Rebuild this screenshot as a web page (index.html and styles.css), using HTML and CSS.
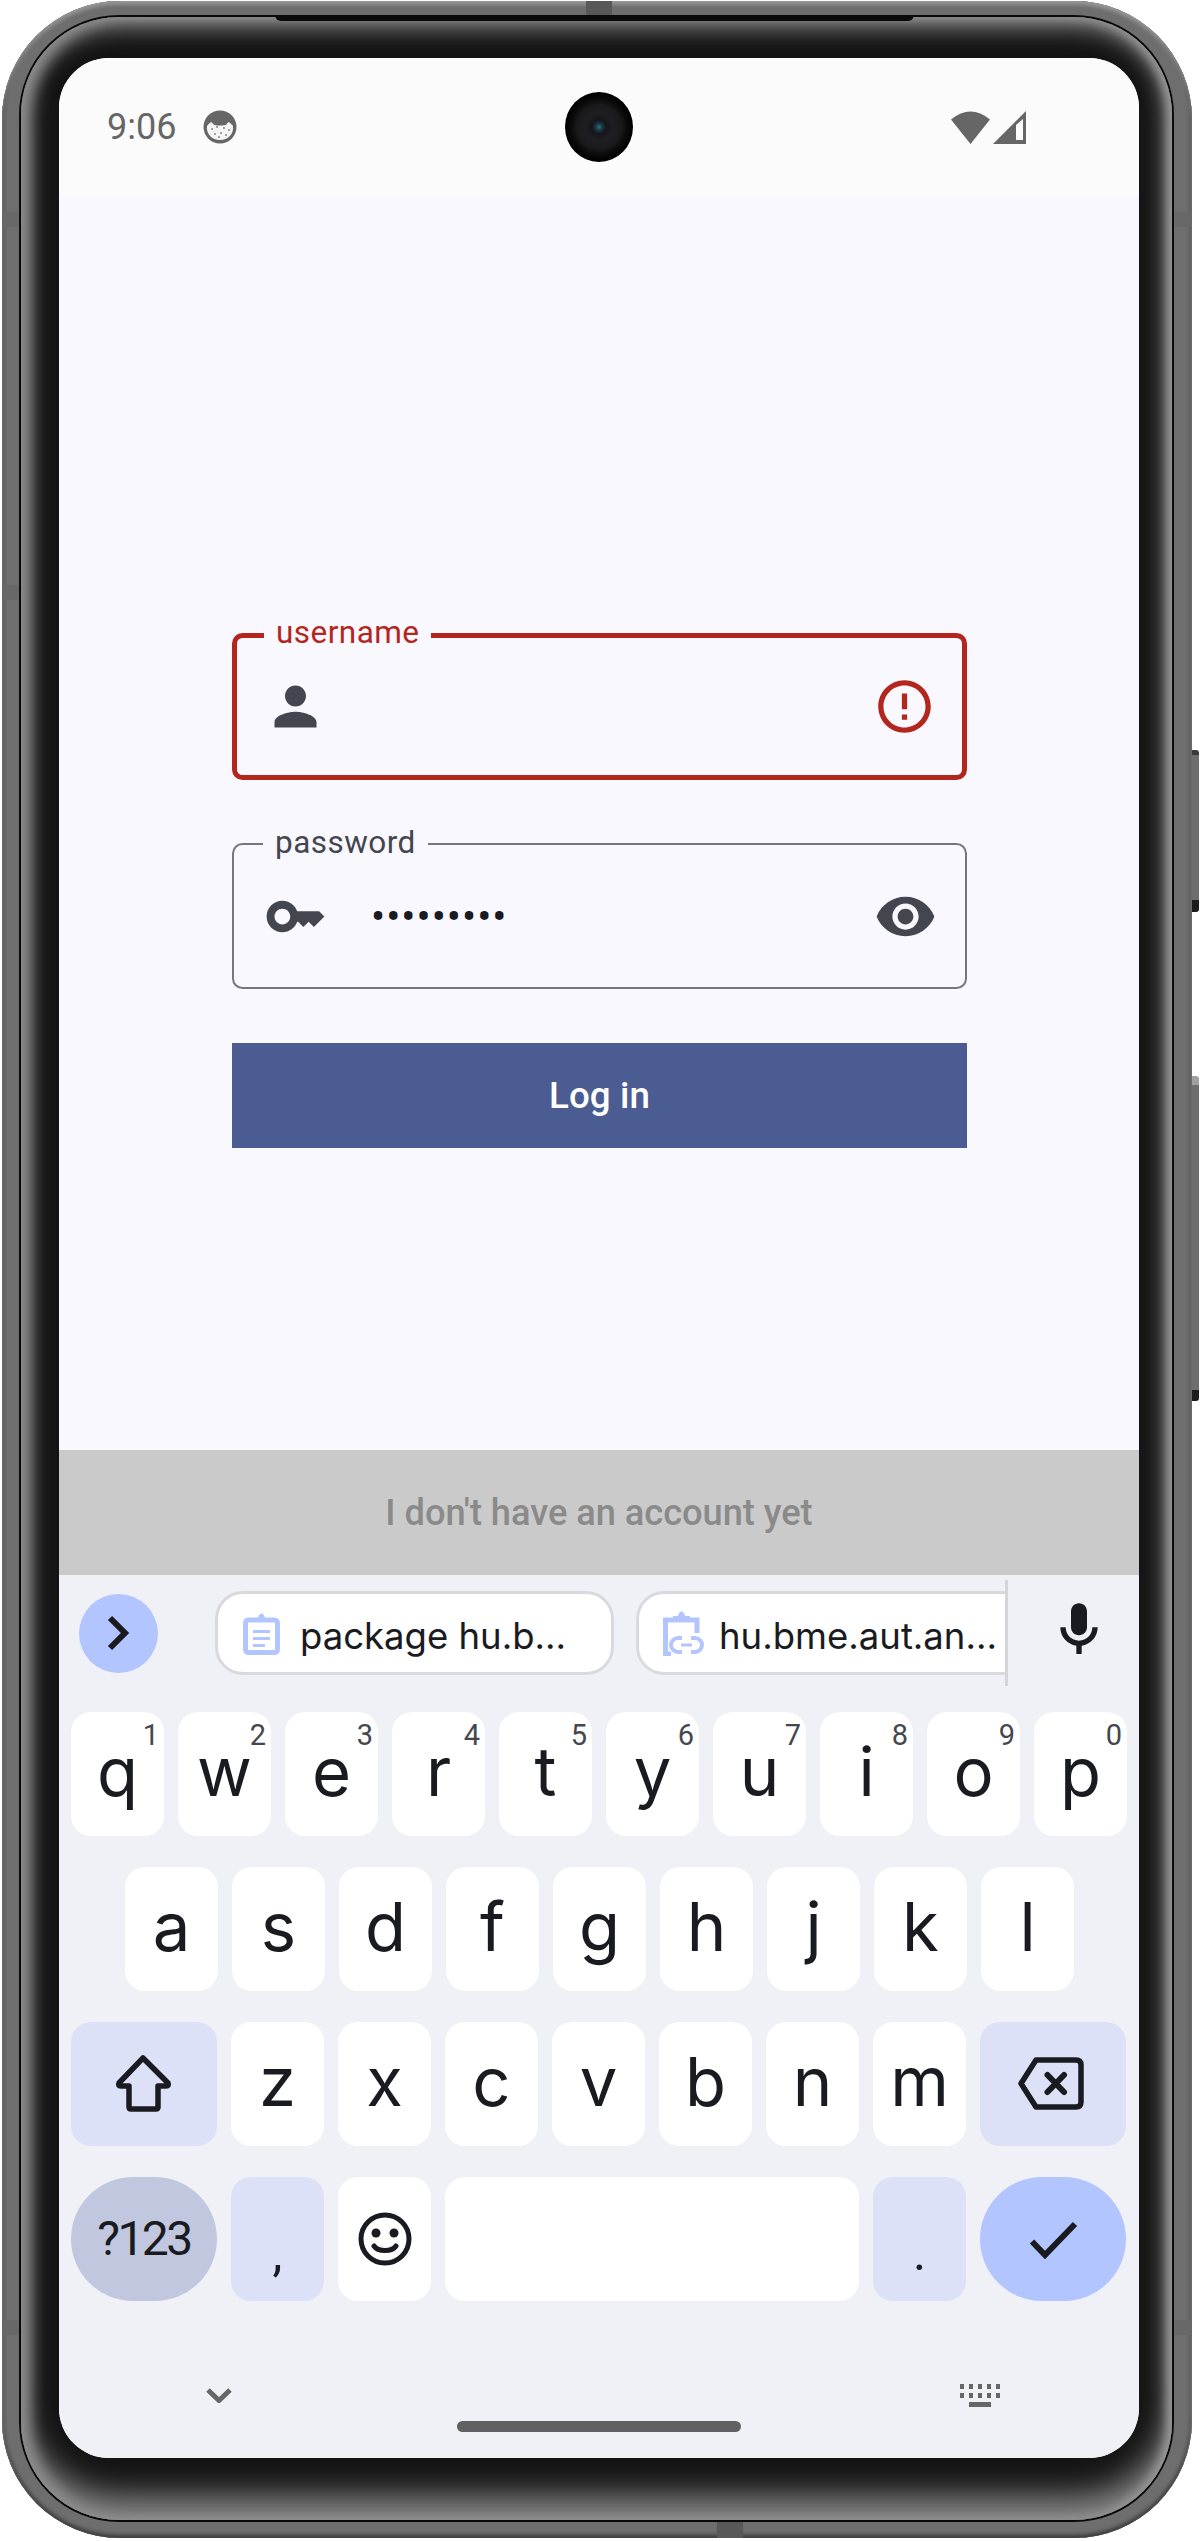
FILE: index.html
```html
<!DOCTYPE html>
<html lang="en">
  <head>
    <meta charset="UTF-8" />
    <title>Log in</title>
    <link rel="stylesheet" href="styles.css">
  </head>
  <body>
    <div class="device">
      <div class="phone">
        <div class="phone-line">
          <div class="phone-bezel">
            <div class="screen">
              <div class="status-bar">
                <span class="clock">9:06</span>
                <svg class="status-app" width="34" height="34" viewBox="0 0 34 34">
                  <circle cx="17" cy="17" r="16.5" fill="#666" />
                  <path d="M4 16c3-4 5-5 6-2 2 2 12 2 14 0 1-3 3-2 6 2 1 8-5 14-13 14S3 24 4 16z" fill="#f4f4f4" />
                  <g fill="#888">
                    <circle cx="9" cy="19" r="1" /><circle cx="14" cy="17" r="1" /><circle cx="21" cy="18" r="1" />
                    <circle cx="26" cy="20" r="1" /><circle cx="12" cy="24" r="1" /><circle cx="18" cy="23" r="1" />
                    <circle cx="23" cy="25" r="1" /><circle cx="16" cy="27" r="1" />
                  </g>
                </svg>
                <span class="status-right">
                  <svg width="39" height="34" viewBox="0 0 39 34"><path d="M0 9.5Q19.5-6.500 39 9.500L19.500 34z" fill="#666" /></svg>
                  <svg width="33" height="33" viewBox="0 0 33 33"><path d="M0 33 33 0V33z" fill="#666" /><path d="M23 14 30 8V29H23z" fill="#fbfbfb" /></svg>
                </span>
              </div>
              <div class="camera"></div>

              <div class="content">
                <form class="login-form">
                  <div class="field field-error">
                    <label class="field-label">username</label>
                    <svg class="field-icon" viewBox="0 0 24 24"><path d="M12 12c2.210 0 4-1.790 4-4s-1.790-4-4-4-4 1.790-4 4 1.790 4 4 4zm0 2c-2.670 0-8 1.340-8 4v2h16v-2c0-2.660-5.330-4-8-4z" /></svg>
                    <span class="field-value"></span>
                    <svg class="field-icon icon-error" viewBox="0 0 24 24"><path d="M11 15h2v2h-2zm0-8h2v6h-2zm.99-5C6.470 2 2 6.480 2 12s4.470 10 9.990 10C17.520 22 22 17.520 22 12S17.520 2 11.990 2zM12 20c-4.420 0-8-3.580-8-8s3.580-8 8-8 8 3.580 8 8-3.580 8-8 8z" /></svg>
                  </div>
                  <div class="field">
                    <label class="field-label">password</label>
                    <svg class="field-icon" viewBox="0 0 24 24"><path d="M21 10h-8.350C11.830 7.670 9.610 6 7 6c-3.310 0-6 2.690-6 6s2.690 6 6 6c2.610 0 4.830-1.670 5.650-4H13l2 2 2-2 2 2 4-4.040L21 10zM7 15c-1.650 0-3-1.350-3-3s1.350-3 3-3 3 1.350 3 3-1.350 3-3 3z" /></svg>
                    <span class="field-value">•••••••••</span>
                    <svg class="field-icon" viewBox="0 0 24 24"><path d="M12 4.500C7 4.500 2.730 7.610 1 12c1.730 4.390 6 7.500 11 7.500s9.270-3.110 11-7.500c-1.730-4.390-6-7.500-11-7.500zM12 17c-2.760 0-5-2.240-5-5s2.240-5 5-5 5 2.240 5 5-2.240 5-5 5zm0-8c-1.660 0-3 1.340-3 3s1.340 3 3 3 3-1.340 3-3-1.340-3-3-3z" /></svg>
                  </div>
                  <button type="button" class="login-btn">Log in</button>
                </form>
              </div>

              <div class="no-account">I don't have an account yet</div>

              <div class="keyboard">
                <div class="strip">
                  <span class="strip-toggle">
                    <svg width="24" height="36" viewBox="0 0 24 36"><path d="M3 3 18 18 3 33" fill="none" stroke="#1a1b21" stroke-width="6" /></svg>
                  </span>
                  <div class="chips">
                    <div class="chip chip-first">
                      <svg width="37" height="43" viewBox="0 0 37 43">
                        <rect x="2.500" y="8" width="32" height="32.500" rx="3" fill="none" stroke="#b2c5ff" stroke-width="5" />
                        <path d="M10 10V6h5c1-6 6-6 7 0h5v4z" fill="#b2c5ff" />
                        <path d="M10 18h17v3H10zM10 25h17v3H10zM10 32h12v3H10z" fill="#b2c5ff" />
                      </svg>
                      <span class="chip-text">package hu.b…</span>
                    </div>
                    <div class="chip chip-second">
                      <svg width="42" height="45" viewBox="0 0 42 45">
                        <path d="M8 43H2.500V9H34V22" fill="none" stroke="#b2c5ff" stroke-width="5" />
                        <path d="M10 11V5h5c1-6 6-6 7 0h5v6z" fill="#b2c5ff" />
                        <path d="M19 27h-4a7 7 0 0 0 0 14h4M28 27h4a7 7 0 0 1 0 14h-4" fill="none" stroke="#b2c5ff" stroke-width="4" />
                        <path d="M18 32.500h11v3H18z" fill="#b2c5ff" />
                      </svg>
                      <span class="chip-text">hu.bme.aut.an…</span>
                    </div>
                  </div>
                  <svg class="mic" width="64" height="64" viewBox="0 0 24 24"><path d="M12 14c1.660 0 3-1.340 3-3V5c0-1.660-1.340-3-3-3S9 3.340 9 5v6c0 1.660 1.340 3 3 3zM17 11c0 2.760-2.240 5-5 5s-5-2.240-5-5H5c0 3.530 2.610 6.430 6 6.920V21h2v-3.080c3.390-.49 6-3.390 6-6.920h-2z" fill="#1a1b21" /></svg>
                </div>

                <div class="rows">
                  <div class="row">
                    <span class="key key-char">q<sup class="hint">1</sup></span>
                    <span class="key key-char">w<sup class="hint">2</sup></span>
                    <span class="key key-char">e<sup class="hint">3</sup></span>
                    <span class="key key-char">r<sup class="hint">4</sup></span>
                    <span class="key key-char">t<sup class="hint">5</sup></span>
                    <span class="key key-char">y<sup class="hint">6</sup></span>
                    <span class="key key-char">u<sup class="hint">7</sup></span>
                    <span class="key key-char">i<sup class="hint">8</sup></span>
                    <span class="key key-char">o<sup class="hint">9</sup></span>
                    <span class="key key-char">p<sup class="hint">0</sup></span>
                  </div>
                  <div class="row row-home">
                    <span class="key key-char">a</span>
                    <span class="key key-char">s</span>
                    <span class="key key-char">d</span>
                    <span class="key key-char">f</span>
                    <span class="key key-char">g</span>
                    <span class="key key-char">h</span>
                    <span class="key key-char">j</span>
                    <span class="key key-char">k</span>
                    <span class="key key-char">l</span>
                  </div>
                  <div class="row">
                    <span class="key key-wide key-fn">
                      <svg width="62" height="60" viewBox="0 0 62 60"><path d="M30 4 55 29Q56.500 32 53 32H45V53Q45 55 43 55H18Q16 55 16 53V32H8Q4.500 32 6 29z" fill="none" stroke="#1a1b21" stroke-width="5.500" stroke-linejoin="round" /></svg>
                    </span>
                    <span class="key key-char">z</span>
                    <span class="key key-char">x</span>
                    <span class="key key-char">c</span>
                    <span class="key key-char">v</span>
                    <span class="key key-char">b</span>
                    <span class="key key-char">n</span>
                    <span class="key key-char">m</span>
                    <span class="key key-wide key-fn">
                      <svg class="backspace" width="66" height="53" viewBox="0 0 66 53">
                        <path d="M18 3H58Q63 3 63 8V45Q63 50 58 50H18L3 26.500z" fill="none" stroke="#1a1b21" stroke-width="5.500" stroke-linejoin="round" />
                        <path d="M29.500 18 46 35M46 18 29.500 35" fill="none" stroke="#1a1b21" stroke-width="6" stroke-linecap="round" />
                      </svg>
                    </span>
                  </div>
                  <div class="row">
                    <span class="key key-wide key-symbols">?123</span>
                    <span class="key key-fn key-punct">,</span>
                    <span class="key">
                      <svg width="54" height="54" viewBox="0 0 54 54">
                        <circle cx="27" cy="27" r="24" fill="none" stroke="#1a1b21" stroke-width="5" />
                        <circle cx="18" cy="21" r="4.500" fill="#1a1b21" /><circle cx="36" cy="21" r="4.500" fill="#1a1b21" />
                        <path d="M16 34c4 6 18 6 22 0" fill="none" stroke="#1a1b21" stroke-width="5" stroke-linecap="round" />
                      </svg>
                    </span>
                    <span class="key key-space"></span>
                    <span class="key key-fn key-punct">.</span>
                    <span class="key key-wide key-enter">
                      <svg width="50" height="40" viewBox="0 0 50 40"><path d="M4 22.500 17 36 47 5" fill="none" stroke="#1a1b21" stroke-width="6" /></svg>
                    </span>
                  </div>
                </div>

                <div class="kb-actions">
                  <svg width="26" height="15" viewBox="0 0 26 15"><path d="M2 2 13 12.500 24 2" fill="none" stroke="#666" stroke-width="5" /></svg>
                  <svg width="40" height="23" viewBox="0 0 40 23" fill="#666">
                    <path d="M0 0h4v5H0zM9 0h4v5H9zM18 0h4v5h-4zM27 0h4v5h-4zM36 0h4v5h-4z" />
                    <path d="M0 9h4v5H0zM9 9h4v5H9zM18 9h4v5h-4zM27 9h4v5h-4zM36 9h4v5h-4z" />
                    <path d="M9 18h22v5H9z" />
                  </svg>
                </div>
                <div class="home-pill"></div>
              </div>
            </div>
          </div>
        </div>
      </div>

      <div class="notch-top"></div>
      <div class="seam seam-top"></div>
      <div class="seam seam-bottom"></div>
      <div class="band band-left band-a"></div>
      <div class="band band-left band-b"></div>
      <div class="band band-left band-c"></div>
      <div class="band band-right band-a"></div>
      <div class="band band-right band-c"></div>
      <div class="side-btn side-power"></div>
      <div class="side-btn side-volume"></div>
    </div>
  </body>
</html>
```

FILE: styles.css
```css
html,
body {
  margin: 0;
  background: #ffffff;
}
.device {
  position: relative;
  width: 1200px;
  height: 2541px;
  padding: 1px 8px 3px 2px;
  box-sizing: border-box;
  overflow: hidden;
  font-family: Roboto, sans-serif;
}

/* phone frame */
.phone {
  padding: 14px 18px 16px 17px;
  border-radius: 118px;
  background: #6e6e6e;
  box-shadow: inset 0 3px 4px #a2a2a2, inset 0 -3px 4px #3c3c3c, inset 2px 0 3px #484848, inset -2px 0 3px #484848;
}
.phone-line {
  border: 2px solid #0a0a0a;
  border-radius: 100px;
}
.phone-bezel {
  padding: 41px 33px 62px 38px;
  border-radius: 98px;
  background: #141414;
  box-shadow: inset 8px 0 14px #8c8c8c, inset -5px 0 10px #9a9a9a, inset 0 12px 22px #7a7a7a, inset 0 -24px 32px #8a8a8a;
}
.notch-top {
  position: absolute;
  top: 15px;
  left: 275px;
  width: 639px;
  height: 6px;
  background: #0a0a0a;
  border-radius: 0 0 8px 8px;
}
.seam {
  position: absolute;
  left: 586px;
  width: 26px;
  background: #585858;
}
.seam-top {
  top: 1px;
  height: 14px;
}
.seam-bottom {
  left: 717px;
  top: 2522px;
  height: 16px;
}
.band {
  position: absolute;
  width: 17px;
  height: 15px;
  background: #686868;
}
.band-left {
  left: 2px;
}
.band-right {
  left: 1175px;
}
.band-a {
  top: 212px;
}
.band-b {
  top: 585px;
}
.band-c {
  top: 2320px;
}
.side-btn {
  position: absolute;
  left: 1192px;
  width: 7px;
  background: #6e6e6e;
  border-radius: 0 3px 3px 0;
}
.side-power {
  top: 750px;
  height: 162px;
  border-top: 5px solid #3a3a3a;
  border-bottom: 12px solid #1c1c1c;
  box-sizing: border-box;
}
.side-volume {
  top: 1076px;
  height: 325px;
  border-top: 9px solid #a0a0a0;
  border-bottom: 11px solid #1c1c1c;
  box-sizing: border-box;
}

/* screen */
.screen {
  position: relative;
  display: flex;
  flex-direction: column;
  width: 1080px;
  height: 2400px;
  border-radius: 50px;
  overflow: hidden;
  background: #f9f8ff;
}
.status-bar {
  display: flex;
  align-items: center;
  height: 138px;
  padding: 0 113px 0 48px;
  box-sizing: border-box;
  background: #fbfbfb;
}
.clock {
  font-size: 36px;
  line-height: 36px;
  color: #666666;
}
.status-app {
  margin-left: 27px;
}
.status-right {
  display: flex;
  align-items: flex-end;
  gap: 3px;
  margin-left: auto;
}
.camera {
  position: absolute;
  top: 34px;
  left: 506px;
  width: 68px;
  height: 70px;
  border-radius: 50%;
  background: radial-gradient(circle at 50% 50%, #2b7480 0, #1c3a4a 3px, #141619 7px, #1f1f22 14px, #1a1a1c 22px, #0c0c0c 27px, #000000 34px);
}

/* login form */
.content {
  flex: 1;
  padding: 437px 172px 0 173px;
}
.login-form {
  display: flex;
  flex-direction: column;
}
.field {
  position: relative;
  display: flex;
  align-items: center;
  height: 146px;
  padding: 0 28.4px 0 30px;
  margin-bottom: 63px;
  box-sizing: border-box;
  border: 2.6px solid #74777f;
  border-radius: 10.5px;
}
.field-error {
  height: 147px;
  padding: 0 26px 0 27px;
  border: 5.25px solid #b3261e;
}
.field-label {
  position: absolute;
  top: -19.6px;
  left: 29px;
  padding: 0 12px;
  font-size: 31.5px;
  line-height: 36px;
  letter-spacing: 0.45px;
  color: #44464f;
  background: #f9f8ff;
}
.field-error .field-label {
  top: -23px;
  left: 27px;
  color: #b3261e;
}
.field-icon {
  flex: none;
  width: 63px;
  height: 63px;
  fill: #44464f;
}
.field-value {
  flex: 1;
  padding-left: 44px;
  font-size: 42px;
  letter-spacing: 1px;
  color: #1a1b21;
}
.icon-error {
  fill: #b3261e;
}
.login-btn {
  height: 105px;
  margin-top: -9px;
  border: none;
  border-radius: 0;
  background: #4a5c92;
  color: #ffffff;
  font-family: Roboto, sans-serif;
  font-size: 36.75px;
  font-weight: 500;
  letter-spacing: 0.1px;
}
.no-account {
  height: 125px;
  line-height: 125px;
  text-align: center;
  background: #cacaca;
  color: #8a8a8a;
  font-size: 36.25px;
  font-weight: 500;
  letter-spacing: -0.05px;
}

/* keyboard */
.keyboard {
  height: 883px;
  padding-top: 5px;
  box-sizing: border-box;
  background: #f0f0f7;
}
.strip {
  display: flex;
  align-items: center;
  height: 106px;
  margin-bottom: 25.7px;
  padding-left: 20px;
}
.strip-toggle {
  flex: none;
  display: flex;
  align-items: center;
  justify-content: center;
  width: 79px;
  height: 79px;
  margin-right: 57px;
  border-radius: 50%;
  background: #b2c5ff;
}
.chips {
  flex: none;
  display: flex;
  align-items: center;
  gap: 22.5px;
  align-self: stretch;
  width: 793px;
  box-sizing: border-box;
  border-right: 3px solid #d4d4da;
  overflow: hidden;
}
.chip {
  flex: none;
  display: flex;
  align-items: center;
  height: 84px;
  box-sizing: border-box;
  border: 3px solid #d9d9df;
  border-radius: 28px;
  background: #ffffff;
  font-family: Inter, sans-serif;
  font-size: 36.5px;
  color: #1a1b21;
  white-space: nowrap;
}
.chip-text {
  padding-top: 5px;
}
.chip-first {
  width: 398.500px;
  padding-left: 25px;
  gap: 20px;
}
.chip-second {
  width: 420px;
  padding-left: 24px;
  gap: 14px;
}
.mic {
  flex: none;
  margin: -6px 0 0 39px;
}
.rows {
  display: flex;
  flex-direction: column;
  gap: 30.670px;
}
.row {
  display: flex;
  gap: 14px;
  height: 124.330px;
  padding-left: 12px;
}
.row-home {
  padding-left: 66px;
}
.key {
  position: relative;
  flex: none;
  display: flex;
  align-items: center;
  justify-content: center;
  width: 93px;
  height: 100%;
  border-radius: 20px;
  background: #ffffff;
  color: #1a1b21;
}
.key-char {
  box-sizing: border-box;
  padding-bottom: 3px;
  font-family: Inter, sans-serif;
  font-size: 67px;
  line-height: 120px;
}
.hint {
  position: absolute;
  top: 9px;
  right: 5px;
  font-family: Roboto, sans-serif;
  font-size: 29px;
  line-height: 29px;
  color: #46464f;
}
.key-wide {
  width: 146px;
}
.key-fn {
  background: #dde1f8;
}
.key-symbols {
  border-radius: 63px;
  background: #c1c7df;
  font-size: 48px;
  letter-spacing: -2.5px;
}
.key-punct {
  align-items: flex-start;
  padding-top: 14px;
  box-sizing: border-box;
  font-size: 50px;
  line-height: 124px;
}
.key-space {
  width: 414px;
}
.key-enter {
  border-radius: 63px;
  background: #b2c5ff;
}
.backspace {
  margin-right: 4px;
}
.kb-actions {
  display: flex;
  align-items: center;
  justify-content: space-between;
  height: 23px;
  margin-top: 83px;
  padding: 0 139px 0 147px;
}
.home-pill {
  width: 284px;
  height: 11px;
  margin: 14px auto 0;
  border-radius: 6px;
  background: #616161;
}
```
